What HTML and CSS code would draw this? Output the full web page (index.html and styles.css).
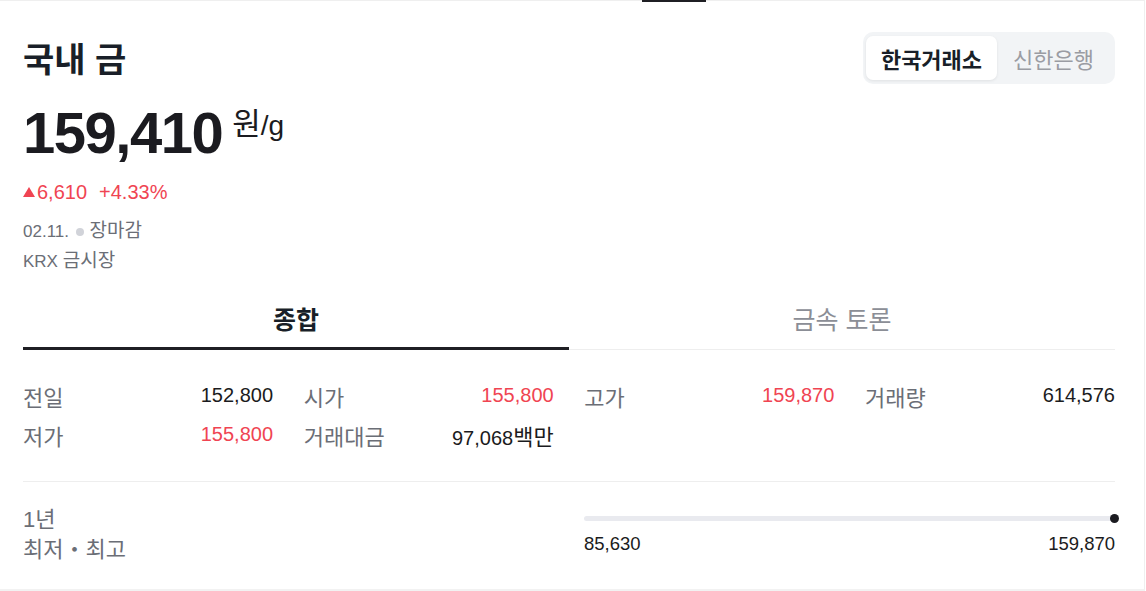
FILE: index.html
```html
<!DOCTYPE html>
<html lang="ko">
<head>
<meta charset="utf-8">
<link rel="stylesheet" href="styles.css">
</head>
<body>
<div class="card">
  <div class="top-indicator"></div>
  <div class="header">
    <h1 class="title">국내 금</h1>
    <div class="segment">
      <span class="seg-item active">한국거래소</span>
      <span class="seg-item">신한은행</span>
    </div>
  </div>
  <div class="price-row">
    <span class="price">159,410</span><span class="unit"><span class="ko">원</span>/g</span>
  </div>
  <div class="change"><span class="tri"></span>6,610<span class="pct">+4.33%</span></div>
  <div class="meta first">02.11. <span class="dot"></span> <span class="ko">장마감</span></div>
  <div class="meta">KRX <span class="ko">금시장</span></div>

  <div class="tabs">
    <div class="tab active">종합</div>
    <div class="tab">금속 토론</div>
  </div>

  <div class="stats">
    <div class="stat"><span class="label">전일</span><span class="val">152,800</span></div>
    <div class="stat"><span class="label">시가</span><span class="val red">155,800</span></div>
    <div class="stat"><span class="label">고가</span><span class="val red">159,870</span></div>
    <div class="stat"><span class="label">거래량</span><span class="val">614,576</span></div>
    <div class="stat"><span class="label">저가</span><span class="val red">155,800</span></div>
    <div class="stat"><span class="label">거래대금</span><span class="val">97,068<span class="kr">백만</span></span></div>
  </div>

  <div class="range">
    <div class="range-label">
      <div>1년</div>
      <div>최저・최고</div>
    </div>
    <div class="range-bar-wrap">
      <div class="range-bar"><span class="range-dot"></span></div>
      <div class="range-nums"><span>85,630</span><span>159,870</span></div>
    </div>
  </div>
</div>
</body>
</html>
```
FILE: styles.css
```css
* { box-sizing: border-box; }
html, body { margin: 0; padding: 0; background: #fff; }
body {
  font-family: "Liberation Sans", "Noto Sans CJK KR", sans-serif;
  color: #191f28;
}
.card {
  position: relative;
  width: 1145px;
  height: 591px;
  border-top: 1px solid #efefef;
  border-right: 1px solid #efefef;
  border-bottom: 2px solid #f2f2f2;
  padding: 0 29px 0 23px;
}
.top-indicator {
  position: absolute;
  top: -1px;
  left: 642px;
  width: 64px;
  height: 2px;
  background: #1f1f24;
}
.header {
  display: flex;
  justify-content: space-between;
  align-items: center;
  margin-top: 31px;
  height: 52px;
}
.title {
  margin: 0;
  font-size: 34px;
  font-weight: 700;
  line-height: 1;
  margin-top: 4px;
}
.segment {
  display: flex;
  align-items: center;
  background: #f2f4f6;
  border-radius: 10px;
  padding: 4px 3px;
  height: 52px;
  width: 252px;
}
.seg-item {
  height: 44px;
  display: flex;
  align-items: center;
  justify-content: center;
  font-size: 22px;
  color: #9a9ca3;
  padding: 0 16px;
  border-radius: 7px;
  white-space: nowrap;
}
.seg-item.active {
  background: #fff;
  color: #191f28;
  font-weight: 700;
  width: 131px;
  padding: 0;
  box-shadow: 0 1px 3px rgba(0,0,0,0.08);
}
.price-row {
  display: flex;
  align-items: flex-start;
  margin-top: 20px;
  height: 58px;
}
.price {
  font-size: 58px;
  font-weight: 700;
  line-height: 58px;
  letter-spacing: -1.5px;
  color: #1b1b20;
}
.unit {
  font-size: 28px;
  line-height: 34px;
  margin-left: 10px;
  margin-top: 5px;
  color: #1b1b20;
}
.unit .ko { font-size: 31px; line-height: 1; }
.change {
  margin-top: 20px;
  font-size: 20px;
  line-height: 20px;
  color: #f04452;
  display: flex;
  align-items: center;
}
.tri {
  display: inline-block;
  width: 0; height: 0;
  border-left: 6px solid transparent;
  border-right: 6px solid transparent;
  border-bottom: 10px solid #f04452;
  margin-right: 2px;
  margin-bottom: 1px;
}
.pct { margin-left: 12px; }
.meta {
  font-size: 17px;
  line-height: 30px;
  height: 30px;
  color: #6b6e76;
}
.meta .ko { font-size: 19px; line-height: 1; }
.meta.first { margin-top: 15px; }
.dot {
  display: inline-block;
  width: 8px; height: 8px;
  border-radius: 50%;
  background: #d1d3d9;
  margin: 0 1px 1px 2px;
  vertical-align: middle;
}
.tabs {
  display: flex;
  margin-top: 16px;
  border-bottom: 1px solid #eeeeee;
}
.tab {
  flex: 1;
  text-align: center;
  font-size: 25px;
  line-height: 55px;
  height: 57px;
  color: #8b8e96;
  border-bottom: 3px solid transparent;
  margin-bottom: -1px;
}
.tab.active {
  color: #191f28;
  font-weight: 700;
  border-bottom-color: #1f1f24;
}
.stats {
  display: grid;
  grid-template-columns: repeat(4, 250px);
  column-gap: 30.67px;
  padding-top: 26px;
  padding-bottom: 27px;
  border-bottom: 1px solid #eeeeee;
}
.stat {
  display: flex;
  justify-content: space-between;
  align-items: center;
  height: 39px;
}
.label {
  font-size: 22px;
  color: #6b6e76;
}
.val {
  font-size: 20px;
  color: #1b1b20;
}
.val.red { color: #f04452; }
.kr { font-size: 22px; }
.range {
  display: grid;
  grid-template-columns: 531px 531px;
  column-gap: 30px;
  padding-top: 23px;
}
.range-label {
  font-size: 22px;
  line-height: 30px;
  color: #6b6e76;
}
.range-bar-wrap { padding-top: 11px; }
.range-bar {
  position: relative;
  height: 5px;
  background: #e9eaef;
  border-radius: 3px;
}
.range-dot {
  position: absolute;
  right: -4px;
  top: -2px;
  width: 9px; height: 9px;
  border-radius: 50%;
  background: #1b1b20;
}
.range-nums {
  display: flex;
  justify-content: space-between;
  margin-top: 13px;
  font-size: 18.5px;
  line-height: 20px;
  color: #1b1b20;
}
```
